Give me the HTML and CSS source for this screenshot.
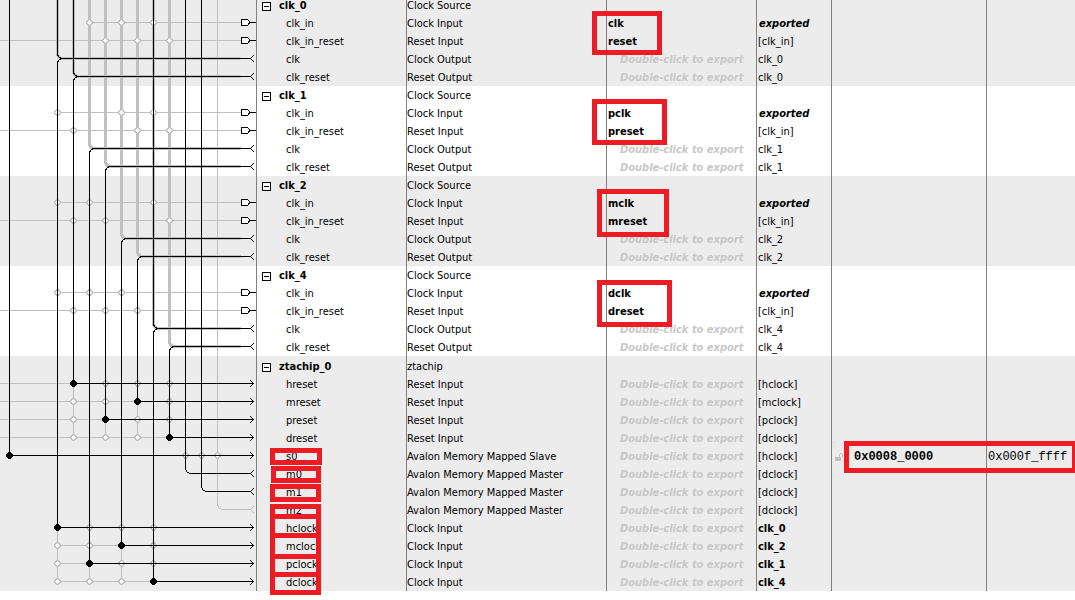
FILE: index.html
```
<!DOCTYPE html>
<html lang="en">
<head>
<meta charset="utf-8">
<title>System Contents</title>
<link rel="stylesheet" href="styles.css">
</head>
<body>
<main class="system">
  <svg class="wiring" id="wiring" width="256" height="595" viewBox="0 -4 256 595" role="img" aria-label="Connections"></svg>
  <table class="parts">
    <colgroup>
      <col class="col-name"><col class="col-description"><col class="col-export"><col class="col-clock"><col class="col-base"><col class="col-end">
    </colgroup>
  </table>
  <svg class="marks" id="marks" aria-hidden="true"></svg>
</main>
<script src="app.js"></script>
</body>
</html>
```

FILE: styles.css
```
body {
  display: flow-root;
  min-height: 100vh;
  margin: 0;
  background: #fff;
  color: #000;
  font-family: "DejaVu Sans Condensed", "DejaVu Sans", sans-serif;
  font-stretch: condensed;
  font-size: 11px;
  line-height: 16px;
}

.system {
  position: relative;
  display: flex;
  align-items: flex-start;
  margin-top: -4px;
}

.wiring {
  flex: none;
  display: block;
  shape-rendering: crispEdges;
  fill: none;
}

.wiring .band { fill: #ececec; }
.wiring .dim { stroke: #c0c0c0; }
.wiring .bus { stroke: #c0c0c0; stroke-width: 3; }
.wiring .wire { stroke: #000; }
.wiring .ring { fill: #c0c0c0; }
.wiring .hole { fill: #fff; }
.wiring .joint { fill: #000; }
.wiring .joint-dim { fill: #c0c0c0; }
.wiring .port { fill: #fff; stroke: #000; }

.parts {
  flex: 1;
  table-layout: fixed;
  border-collapse: separate;
  border-spacing: 0;
}

.col-name, .col-export { width: 150px; }
.col-description { width: 200px; }
.col-clock { width: 75px; }
.col-base { width: 155px; }

.parts td, .parts th {
  height: 16px;
  padding: 2px 0 0;
  border-left: 1px solid #808080;
  text-align: left;
  font-weight: normal;
  white-space: nowrap;
}

.shaded { background: #ececec; }
.parts .tall td, .parts .tall th { padding-top: 3px; }

.parts .port-name { padding-left: 29px; }
.parts .part-name { font-weight: bold; }

.title {
  display: flex;
  align-items: center;
  gap: 8px;
  padding-left: 5px;
}

.toggle {
  width: 9px;
  height: 9px;
  padding: 0;
  border: 1px solid #000;
  background: #fff;
  display: grid;
  place-items: center;
}
.toggle::before {
  content: "";
  width: 5px;
  height: 1px;
  background: #000;
}

.parts .exported { padding-left: 1px; font-weight: bold; }
.parts .hint {
  padding-left: 13px;
  font-weight: bold;
  font-style: italic;
  color: #c8c8c8;
}
.parts .domain { padding-left: 1px; }
.parts .strong { font-weight: bold; }
.parts .domain-exported {
  padding-left: 2px;
  font-weight: bold;
  font-style: italic;
}

.address { font-family: "Liberation Mono", monospace; font-size: 12px; }
.base {
  display: flex;
  align-items: center;
  gap: 11px;
  padding-left: 3px;
  font-weight: bold;
}
.end { padding-left: 1px; }

.lock { fill: #c0c0c0; shape-rendering: crispEdges; }

.marks {
  position: absolute;
  inset: 4px 0 auto 0;
  width: 100%;
  height: 596px;
  fill: none;
  stroke: #ed1c24;
  stroke-width: 5;
  shape-rendering: crispEdges;
  pointer-events: none;
}
```

FILE: app.js
```
const parts = [
  { name: "clk_0", type: "Clock Source", domain: "clk_0", exports: ["clk", "reset"] },
  { name: "clk_1", type: "Clock Source", domain: "clk_1", exports: ["pclk", "preset"] },
  { name: "clk_2", type: "Clock Source", domain: "clk_2", exports: ["mclk", "mreset"] },
  { name: "clk_4", type: "Clock Source", domain: "clk_4", exports: ["dclk", "dreset"] }
].map(p => ({
  name: p.name,
  type: p.type,
  ports: [
    ["clk_in", "Clock Input", "exported", p.exports[0]],
    ["clk_in_reset", "Reset Input", "[clk_in]", p.exports[1]],
    ["clk", "Clock Output", p.domain],
    ["clk_reset", "Reset Output", p.domain]
  ]
}));

parts.push({
  name: "ztachip_0",
  type: "ztachip",
  ports: [
    ["hreset", "Reset Input", "[hclock]"],
    ["mreset", "Reset Input", "[mclock]"],
    ["preset", "Reset Input", "[pclock]"],
    ["dreset", "Reset Input", "[dclock]"],
    ["s0", "Avalon Memory Mapped Slave", "[hclock]", null, ["0x0008_0000", "0x000f_ffff"]],
    ["m0", "Avalon Memory Mapped Master", "[dclock]"],
    ["m1", "Avalon Memory Mapped Master", "[dclock]"],
    ["m2", "Avalon Memory Mapped Master", "[dclock]"],
    ["hclock", "Clock Input", "clk_0", null, null, true],
    ["mclock", "Clock Input", "clk_2", null, null, true],
    ["pclock", "Clock Input", "clk_1", null, null, true],
    ["dclock", "Clock Input", "clk_4", null, null, true]
  ]
});

const lock = '<svg class="lock" width="8" height="9" viewBox="0 0 8 9" aria-hidden="true"><path d="M0 4H6V8H0ZM4 1H5V4H4ZM5 0H7V1H5ZM7 1H8V4H7Z"/></svg>';

document.querySelector(".parts").insertAdjacentHTML("beforeend", parts.map((part, i) => {
  const header = `<tr${i === 4 ? ' class="tall"' : ""}><th class="part-name" scope="rowgroup"><div class="title"><button class="toggle" aria-label="Collapse ${part.name}"></button>${part.name}</div></th><td>${part.type}</td><td></td><td></td><td></td><td></td></tr>`;
  const rows = part.ports.map(([name, type, domain, exported, address, strong]) => {
    const domainClass = domain === "exported" ? "domain domain-exported" : strong ? "domain strong" : "domain";
    return `<tr><th class="port-name" scope="row">${name}</th><td>${type}</td>` +
      `<td class="${exported ? "exported" : "hint"}">${exported || "Double-click to export"}</td>` +
      `<td class="${domainClass}">${domain}</td>` +
      (address ? `<td class="address"><div class="base">${lock}${address[0]}</div></td><td class="address"><div class="end">${address[1]}</div></td>` : "<td></td><td></td>") +
      "</tr>";
  }).join("");
  return `<tbody class="${i % 2 ? "" : "shaded"}">${header}${rows}</tbody>`;
}).join(""));

/* Connection diagram */
const out = [];
const path = (cls, d) => out.push(`<path class="${cls}" d="${d}"/>`);
const h = (cls, x1, x2, y) => path(cls, `M${x1} ${y + 0.5}H${x2}`);
const v = (cls, x, y1, y2) => path(cls, `M${x + 0.5} ${y1}V${y2}`);
const X = [57, 73, 89, 105, 121, 137, 153, 169];

[[-4, 90], [176, 90], [356, 235]].forEach(([y, height]) =>
  out.push(`<rect class="band" x="0" y="${y}" width="256" height="${height}"/>`));

/* dim input rails and the unconnected master */
const inputStart = [89, 57, 57, 57];
[22, 112, 202, 292].forEach((y, i) => {
  h("dim", inputStart[i], 241, y);
  h("dim", 0, 241, y + 18);
});
[[383, 73], [401, 137], [419, 105], [437, 169]].forEach(([y, x]) => h("dim", 0, x, y));
[[545, 121], [563, 89], [581, 153]].forEach(([y, x]) => h("dim", 57, x, y));
[[73, 383, 437], [105, 419, 437], [137, 401, 437], [57, 527, 581], [89, 563, 581], [121, 545, 581]].forEach(([x, a, b]) => v("dim", x, a, b));
path("dim", "M217.5 -4V503Q217.5 509.5 224 509.5H250");

/* thick buses that feed each clock bridge */
const turns = [58, 76, 148, 166, 238, 256, 328, 346];
X.forEach((x, i) => {
  const y = turns[i] + 0.5;
  path("bus", `M${x + 0.5} -4V${y - 6}Q${x + 0.5} ${y} ${x + 6} ${y}H241`);
});

/* open crossings */
const crossings = [
  [22, 89, 121, 153], [40, 105, 137, 169],
  [112, 57, 121, 153], [130, 73, 137, 169],
  [202, 57, 89, 153], [220, 73, 105, 169],
  [292, 57, 89, 121], [310, 73, 105, 137],
  [383, 105, 137, 169], [401, 73, 105, 169], [419, 73, 137, 169], [437, 73, 105, 137],
  [455, 185, 201, 217],
  [527, 89, 121, 153], [545, 57, 89, 153], [563, 57, 121, 153], [581, 57, 89, 121]
];
crossings.forEach(([y, ...xs]) => xs.forEach(x => {
  path("ring", `M${x - 1} ${y - 3}h3v1h1v1h1v3h-1v1h-1v1h-3v-1h-1v-1h-1v-3h1v-1h1z`);
  path("hole", `M${x} ${y - 2}h1v1h1v1h1v1h-1v1h-1v1h-1v-1h-1v-1h-1v-1h1v-1h1z`);
}));

/* live wires */
const ends = [527, 383, 563, 419, 545, 401, 581, 437];
X.forEach((x, i) => {
  const y = turns[i] + 0.5;
  path("wire", `M250 ${y}H${x + 6}Q${x + 0.5} ${y} ${x + 0.5} ${y + 6}V${ends[i]}`);
  if (i < 2 || i === 6) path("wire", `M${x + 0.5} -4V${y - 6}Q${x + 0.5} ${y} ${x + 6} ${y}`);
  h("wire", x, 254, ends[i]);
});
v("wire", 9, -4, 455);
h("wire", 9, 254, 455);
path("wire", "M185.5 -4V467Q185.5 473.5 192 473.5H250");
path("wire", "M201.5 -4V485Q201.5 491.5 208 491.5H250");

/* connected joints */
X.map((x, i) => [x, ends[i]]).concat([[9, 455]]).forEach(([x, y]) =>
  path("joint", `M${x - 1} ${y - 3}h3v1h1v1h1v3h-1v1h-1v1h-3v-1h-1v-1h-1v-3h1v-1h1z`));

/* port glyphs */
[22, 40, 112, 130, 202, 220, 292, 310].forEach(y => {
  path("port", `M241.5 ${y - 2.5}H247.5L250 ${y + 0.5}L247.5 ${y + 3.5}H241.5Z`);
  h("wire", 250, 256, y);
});
const chevron = (cls, tip, step, y) => {
  let d = "";
  for (let k = 0; k < 4; k++) d += `M${tip + step * k} ${y - k}h1v1h-1zM${tip + step * k} ${y + k}h1v1h-1z`;
  path(cls, d);
};
turns.concat([473, 491, 509]).forEach(y => chevron(y === 509 ? "joint-dim" : "joint", 250, 1, y));
ends.concat([455]).forEach(y => chevron("joint", 253, -1, y));

document.getElementById("wiring").innerHTML = out.join("");

/* highlight frames: left, top, right, bottom */
document.getElementById("marks").innerHTML = [
  [592, 11, 662, 55], [592, 99, 667, 145], [597, 189, 669, 237], [597, 280, 672, 327],
  [270, 448, 322, 465], [271, 466, 321, 483], [270, 484, 321, 502],
  [270, 504, 321, 519], [270, 514, 321, 538], [270, 533, 321, 559], [270, 554, 321, 577], [270, 572, 321, 595],
  [844, 441, 1077, 473]
].map(([l, t, r, b]) => `<rect x="${l + 2.5}" y="${t + 2.5}" width="${r - l - 5}" height="${b - t - 5}"/>`).join("");
```
